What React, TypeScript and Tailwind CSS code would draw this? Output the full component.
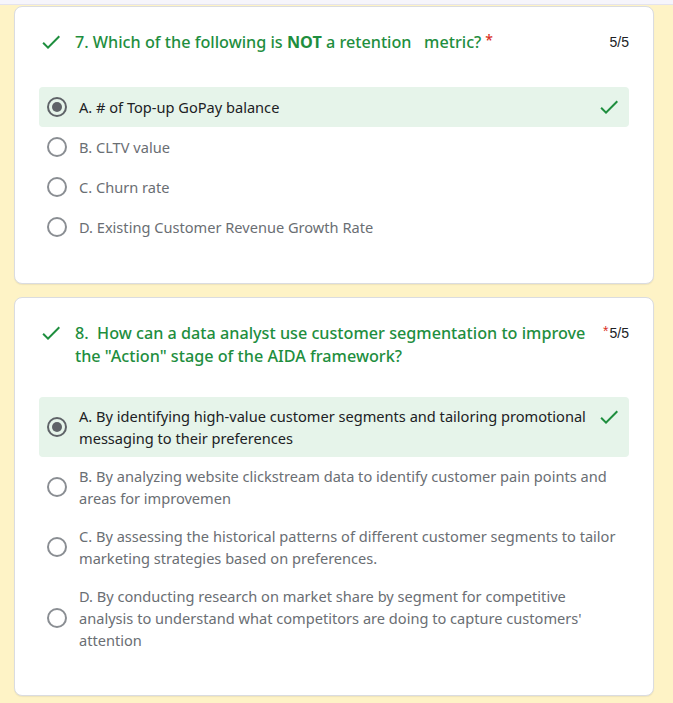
import React from "react";

type Opt = { text: string; selected?: boolean; correct?: boolean };

function CheckIcon({ className }: { className: string }) {
  return (
    <svg viewBox="0 0 24 24" className={className} fill="currentColor" aria-hidden="true">
      <path d="M9 16.17L4.83 12l-1.42 1.41L9 19 21 7l-1.41-1.41z" />
    </svg>
  );
}

function Radio({ selected }: { selected?: boolean }) {
  return (
    <div className="h-6 w-5 shrink-0 flex items-center">
      {selected ? (
        <div className="w-5 h-5 rounded-full border-2 border-[#5f6368] flex items-center justify-center">
          <div className="w-[10px] h-[10px] rounded-full bg-[#5f6368]" />
        </div>
      ) : (
        <div className="w-5 h-5 rounded-full border-2 border-[#8a8e93]" />
      )}
    </div>
  );
}

function Option({ opt }: { opt: Opt }) {
  return (
    <div
      className={
        opt.selected
          ? "flex items-center py-2 pl-2 pr-2 rounded bg-[#e6f4ea]"
          : "flex items-center py-2 pl-2 pr-2 rounded"
      }
    >
      <Radio selected={opt.selected} />
      <div
        className={
          opt.selected
            ? "flex-1 ml-3 text-[14.6px] leading-[22px] text-[#202124]"
            : "flex-1 ml-3 text-[14.6px] leading-[22px] text-[#6a6e73]"
        }
      >
        {opt.text}
      </div>
      {opt.correct && (
        <div className="self-start shrink-0">
          <CheckIcon className="w-6 h-6 text-[#1e8e3e]" />
        </div>
      )}
    </div>
  );
}

function Card({
  title,
  starInline,
  options,
  gapClass,
  className,
}: {
  title: React.ReactNode;
  starInline: boolean;
  options: Opt[];
  gapClass: string;
  className: string;
}) {
  return (
    <div
      className={
        "w-[640px] ml-[14px] bg-white border border-[#dadce0] rounded-lg shadow-[0_1px_1px_rgba(60,64,67,0.08)] pt-6 pb-9 px-6 " +
        className
      }
    >
      <div className="flex items-start">
        <CheckIcon className="w-6 h-6 shrink-0 text-[#1e8e3e] mt-[-1px]" />
        <div className="flex-1 ml-3 text-[16.2px] font-medium leading-[23px] text-[#1e8e3e] whitespace-pre-wrap">
          {title}
          {starInline && <span className="text-[#d93025] text-[14px] relative top-[-3px] ml-1">*</span>}
        </div>
        <div className="shrink-0 ml-1 text-[14px] leading-[23px] text-[#202124] font-['Liberation_Sans',Arial,sans-serif]">
          {!starInline && <span className="text-[#d93025] relative top-[-2px] mr-px">*</span>}
          5/5
        </div>
      </div>
      <div className={"flex flex-col " + gapClass}>
        {options.map((o, i) => (
          <Option key={i} opt={o} />
        ))}
      </div>
    </div>
  );
}

export default function App() {
  return (
    <div className="min-h-[703px] bg-[#fef3c6] font-['Noto_Sans',sans-serif] pb-2">
      <div className="h-[5px] bg-[#f6f5fb] border-b border-[#e4e3ee]" />
      <Card
        className="mt-px"
        starInline={true}
        gapClass="mt-[33px]"
        title={
          <>
            {"7. Which of the following is "}
            <span className="font-bold">NOT</span>
            {" a retention   metric?"}
          </>
        }
        options={[
          { text: "A. # of Top-up GoPay balance", selected: true, correct: true },
          { text: "B. CLTV value" },
          { text: "C. Churn rate" },
          { text: "D. Existing Customer Revenue Growth Rate" },
        ]}
      />
      <Card
        className="mt-[13px]"
        starInline={false}
        gapClass="mt-[29px]"
        title={'8.  How can a data analyst use customer segmentation to improve the "Action" stage of the AIDA framework?'}
        options={[
          {
            text: "A. By identifying high-value customer segments and tailoring promotional messaging to their preferences",
            selected: true,
            correct: true,
          },
          { text: "B. By analyzing website clickstream data to identify customer pain points and areas for improvemen" },
          {
            text: "C. By assessing the historical patterns of different customer segments to tailor marketing strategies based on preferences.",
          },
          {
            text: "D. By conducting research on market share by segment for competitive analysis to understand what competitors are doing to capture customers' attention",
          },
        ]}
      />
    </div>
  );
}
